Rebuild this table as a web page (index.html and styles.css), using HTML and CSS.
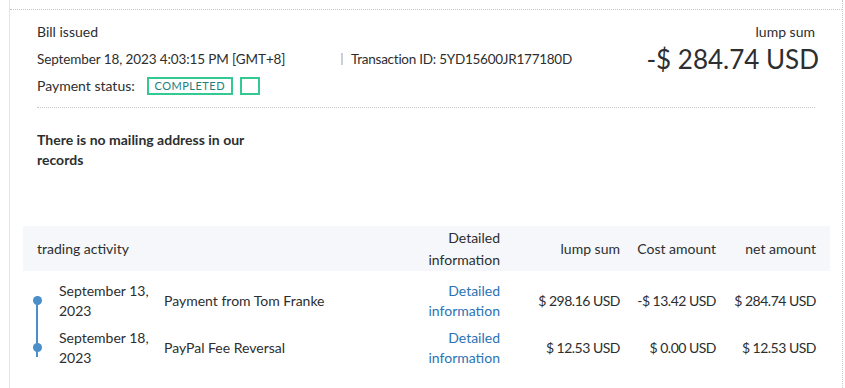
FILE: index.html
```html
<!DOCTYPE html>
<html>
<head>
<meta charset="utf-8">
<link rel="stylesheet" href="styles.css">
</head>
<body>
<div class="frame">
  <div class="card">
    <section class="summary">
      <div class="summary-left">
        <div class="line">Bill issued</div>
        <div class="line meta">
          <span class="date">September 18, 2023 4:03:15 PM [GMT+8]</span>
          <span class="txn">Transaction ID: 5YD15600JR177180D</span>
        </div>
        <div class="line status">
          <span>Payment status:</span>
          <span class="badge">COMPLETED</span>
          <span class="badge empty"></span>
        </div>
      </div>
      <div class="summary-right">
        <div class="total-label">lump sum</div>
        <div class="total">-$ 284.74 USD</div>
      </div>
    </section>
    <section class="address">There is no mailing address in our records</section>
    <section class="activity">
      <div class="grid head">
        <div class="span2">trading activity</div>
        <div class="r">Detailed information</div>
        <div class="r">lump sum</div>
        <div class="r">Cost amount</div>
        <div class="r">net amount</div>
      </div>
      <div class="rows">
        <div class="grid row first">
          <div class="when">September 13, 2023</div>
          <div>Payment from Tom Franke</div>
          <div class="r link">Detailed information</div>
          <div class="r num">$ 298.16 USD</div>
          <div class="r num">-$ 13.42 USD</div>
          <div class="r num">$ 284.74 USD</div>
        </div>
        <div class="grid row last">
          <div class="when">September 18, 2023</div>
          <div>PayPal Fee Reversal</div>
          <div class="r link">Detailed information</div>
          <div class="r num">$ 12.53 USD</div>
          <div class="r num">$ 0.00 USD</div>
          <div class="r num">$ 12.53 USD</div>
        </div>
      </div>
    </section>
  </div>
</div>
</body>
</html>
```

FILE: styles.css
```css
html, body {
  margin: 0;
  padding: 0;
  background: #fff;
}
body {
  font-family: Lato, "Noto Sans", sans-serif;
  font-size: 14px;
  color: #2c2e2f;
}
.frame {
  margin-left: 9px;
  width: 834px;
  height: 388px;
  box-sizing: border-box;
  border-left: 1px solid #e4e4e4;
  border-right: 1px dotted #c9c9c9;
  padding-top: 9px;
}
.card {
  border-top: 1px dotted #c9c9c9;
  padding: 0 12px 0 13px;
}
.summary {
  display: flex;
  justify-content: space-between;
  margin: 0 15px 0 14px;
  padding: 12px 0 4px;
  border-bottom: 1px dotted #c9c9c9;
}
.line {
  height: 27px;
  line-height: 20px;
}
.meta {
  display: flex;
  font-size: 13.5px;
}
.date {
  width: 304px;
  letter-spacing: -0.1px;
}
.txn {
  border-left: 2px solid #c9ced8;
  padding-left: 8px;
  line-height: 12px;
  height: 12px;
  margin-top: 4px;
  letter-spacing: -0.25px;
}
.status {
  display: flex;
  align-items: flex-start;
}
.badge {
  margin-left: 12px;
  margin-top: 1px;
  box-sizing: border-box;
  height: 18px;
  width: 86px;
  border: 2px solid #33c992;
  color: #1c7f7c;
  font-size: 11px;
  letter-spacing: 0.5px;
  line-height: 14px;
  text-align: center;
}
.badge.empty {
  margin-left: 7px;
  width: 20px;
}
.summary-right {
  text-align: right;
}
.total-label {
  line-height: 20px;
  height: 22px;
}
.total {
  font-size: 26px;
  line-height: 30px;
  margin-right: -4px;
}
.address {
  margin: 22px 0 0 14px;
  width: 230px;
  font-weight: 700;
  line-height: 20px;
  height: 96px;
}
.grid {
  display: grid;
  grid-template-columns: 127px 246px 90px 120px 96px 100px;
  padding: 0 14px;
  align-items: center;
}
.span2 {
  grid-column: span 2;
}
.r {
  text-align: right;
}
.num {
  letter-spacing: -0.5px;
}
.head {
  background: #f5f7fa;
  height: 45px;
  line-height: 22px;
}
.rows {
  padding-top: 6px;
}
.row {
  height: 47px;
  line-height: 20px;
}
.when {
  position: relative;
  padding-left: 22px;
  align-self: stretch;
  display: flex;
  align-items: center;
}
.when::before {
  content: "";
  position: absolute;
  left: -1px;
  width: 2px;
  background: #4a8fca;
}
.first .when::before {
  top: 50%;
  bottom: 0;
}
.last .when::before {
  top: 0;
  height: calc(50% + 9px);
}
.when::after {
  content: "";
  position: absolute;
  left: -4.5px;
  top: calc(50% - 4.5px);
  width: 9px;
  height: 9px;
  border-radius: 50%;
  background: #4a8fca;
}
.link {
  color: #2a73b6;
}
```
